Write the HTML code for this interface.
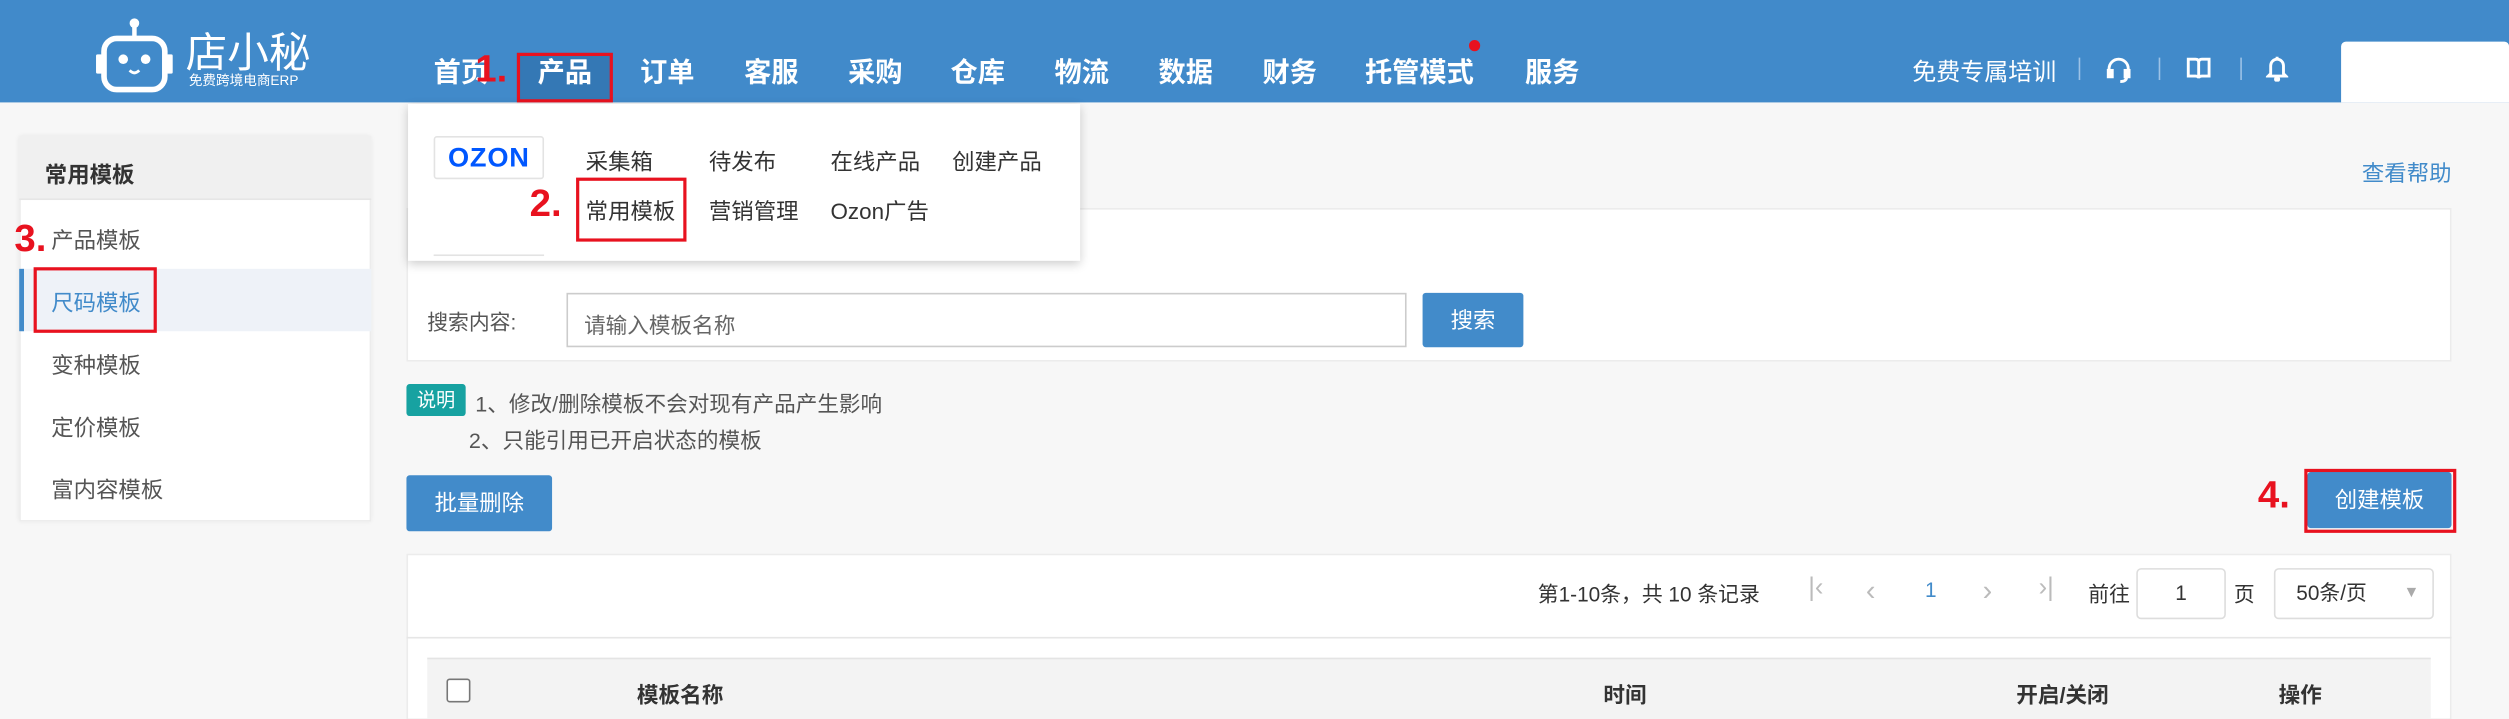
<!DOCTYPE html>
<html><head><meta charset="utf-8"><style>
*{box-sizing:border-box;margin:0;padding:0}
html,body{width:2509px;height:719px;overflow:hidden;background:#f7f7f7}
#w{width:1568px;height:450px;transform:scale(1.6002);transform-origin:0 0;position:relative;font-family:"Liberation Sans","Noto Sans CJK SC",sans-serif;font-size:14px;color:#333}
.a{position:absolute;white-space:nowrap}
.hd{left:0;top:0;width:1568px;height:64px;background:#418aca}
.nav{top:31px;font-size:17px;font-weight:bold;color:#fff}
.red{color:#e8121f;font-weight:bold;font-size:24px}
.rb{border:2px solid #e8121f}
.card{background:#ffffff !important;border:1px solid #ececec}
.btn{background:#428bca;color:#fff;text-align:center;border-radius:2px}
</style></head><body><div id="w">
<div class="a hd"></div>
<!-- logo -->
<svg class="a" style="left:60px;top:11px" width="48" height="47" viewBox="0 0 48 47"><circle cx="24" cy="3.5" r="3" fill="#fff"/><rect x="22.6" y="4" width="2.8" height="9" fill="#fff"/><rect x="5" y="13" width="38" height="32" rx="8" fill="none" stroke="#fff" stroke-width="3.5"/><rect x="0" y="23" width="4" height="12" rx="1" fill="#fff"/><rect x="44" y="23" width="4" height="12" rx="1" fill="#fff"/><circle cx="17" cy="26" r="3" fill="#fff"/><circle cx="31" cy="26" r="3" fill="#fff"/><path d="M21 33 q3 3 6 0" stroke="#fff" stroke-width="1.8" fill="none"/></svg>
<div class="a" style="left:116px;top:13px;font-size:26px;color:#fff;letter-spacing:0px">店小秘</div>
<div class="a" style="left:118px;top:44px;font-size:8.5px;color:#fff">免费跨境电商ERP</div>
<div class="a" style="left:323px;top:33px;width:60px;height:31px;background:#3478b5"></div>
<div class="a rb" style="left:323px;top:33px;width:60px;height:31px"></div>
<div class="a nav" style="left:271px">首页</div>
<div class="a red" style="left:297px;top:30px">1.</div>
<div class="a nav" style="left:336px">产品</div>
<div class="a nav" style="left:400px">订单</div>
<div class="a nav" style="left:465px">客服</div>
<div class="a nav" style="left:530px">采购</div>
<div class="a nav" style="left:594px">仓库</div>
<div class="a nav" style="left:659px">物流</div>
<div class="a nav" style="left:724px">数据</div>
<div class="a nav" style="left:789px">财务</div>
<div class="a nav" style="left:853px">托管模式</div>
<div class="a" style="left:918px;top:25px;width:7px;height:7px;border-radius:50%;background:#e8121f"></div>
<div class="a nav" style="left:953px">服务</div>
<div class="a" style="left:1195px;top:34px;color:#fff;font-size:15px">免费专属培训</div>
<div class="a" style="left:1299px;top:36px;width:1px;height:14px;background:#9cc2e6"></div>
<div class="a" style="left:1349px;top:36px;width:1px;height:14px;background:#9cc2e6"></div>
<div class="a" style="left:1400px;top:36px;width:1px;height:14px;background:#9cc2e6"></div>
<svg class="a" style="left:1316px;top:35px" width="16" height="17" viewBox="0 0 16 17" fill="none" stroke="#fff" stroke-width="1.8"><path d="M2 10V8a6 6 0 0 1 12 0v2"/><rect x="1.5" y="9" width="2.5" height="4" fill="#fff"/><rect x="12" y="9" width="2.5" height="4" fill="#fff"/><path d="M13 13q0 3-4 3"/></svg>
<svg class="a" style="left:1366px;top:35px" width="16" height="16" viewBox="0 0 16 16" fill="none" stroke="#fff" stroke-width="1.8"><path d="M1.5 2h4.5q2 0 2 2v10q0-1.5-2-1.5H1.5zM14.5 2H10q-2 0-2 2v10q0-1.5 2-1.5h4.5z"/></svg>
<svg class="a" style="left:1416px;top:34px" width="14" height="17" viewBox="0 0 14 17" fill="none" stroke="#fff" stroke-width="1.8"><path d="M3 12V7a4 4 0 0 1 8 0v5l1.5 1.5h-11z"/><circle cx="7" cy="15.5" r="1" fill="#fff"/><path d="M7 1.5v1.5"/></svg>
<div class="a" style="left:1463px;top:26px;width:105px;height:38px;background:#fff;border-radius:3px 3px 0 0"></div>

<!-- sidebar -->
<div class="a card" style="left:12px;top:85px;width:220px;height:241px;box-shadow:0 0 3px rgba(0,0,0,.08)"></div>
<div class="a" style="left:12px;top:85px;width:220px;height:40px;background:#f0f0f0;border-bottom:1px solid #e6e6e6"></div>
<div class="a" style="left:28px;top:99px;font-weight:bold">常用模板</div>
<div class="a" style="left:32px;top:140px;color:#555">产品模板</div>
<div class="a" style="left:12px;top:168px;width:220px;height:39px;background:#eef2f8;border-left:3px solid #428bca"></div>
<div class="a" style="left:32px;top:179px;color:#428bca">尺码模板</div>
<div class="a rb" style="left:21px;top:167px;width:77px;height:41px"></div>
<div class="a red" style="left:9px;top:136px">3.</div>
<div class="a" style="left:32px;top:218px;color:#555">变种模板</div>
<div class="a" style="left:32px;top:257px;color:#555">定价模板</div>
<div class="a" style="left:32px;top:296px;color:#555">富内容模板</div>

<div class="a" style="left:1476px;top:98px;color:#428bca;font-size:14px">查看帮助</div>

<!-- search card -->
<div class="a card" style="left:254px;top:130px;width:1278px;height:96px"></div>
<div class="a" style="left:267px;top:191px;color:#555;font-size:13px">搜索内容:</div>
<div class="a" style="left:354px;top:183px;width:525px;height:34px;border:1px solid #ccc;background:#fff"></div>
<div class="a" style="left:365px;top:192px;color:#666;font-size:13.5px">请输入模板名称</div>
<div class="a btn" style="left:889px;top:183px;width:63px;height:34px;line-height:34px">搜索</div>

<div class="a" style="left:254px;top:240px;width:37px;height:20px;background:#17a2a1;color:#fff;font-size:12px;text-align:center;line-height:20px;border-radius:2px">说明</div>
<div class="a" style="left:297px;top:241px;color:#555;font-size:13.5px">1、修改/删除模板不会对现有产品产生影响</div>
<div class="a" style="left:293px;top:264px;color:#555;font-size:13.5px">2、只能引用已开启状态的模板</div>

<div class="a btn" style="left:254px;top:297px;width:91px;height:35px;line-height:35px">批量删除</div>
<div class="a btn" style="left:1442px;top:295px;width:90px;height:35px;line-height:35px">创建模板</div>
<div class="a rb" style="left:1440px;top:293px;width:95px;height:40px"></div>
<div class="a red" style="left:1411px;top:296px">4.</div>

<!-- table card -->
<div class="a card" style="left:254px;top:346px;width:1278px;height:104px"></div>
<div class="a" style="left:254px;top:398px;width:1278px;height:1px;background:#e6e6e6"></div>
<div class="a" style="left:961px;top:361px;font-size:13px">第1-10条，共 10 条记录</div>
<div class="a" style="left:1130px;top:359px;color:#bbb;font-size:16px">|&lsaquo;</div>
<div class="a" style="left:1166px;top:359px;color:#bbb;font-size:18px">&lsaquo;</div>
<div class="a" style="left:1203px;top:361px;color:#428bca;font-size:13px">1</div>
<div class="a" style="left:1239px;top:359px;color:#bbb;font-size:18px">&rsaquo;</div>
<div class="a" style="left:1274px;top:359px;color:#bbb;font-size:16px">&rsaquo;|</div>
<div class="a" style="left:1305px;top:361px;font-size:13px">前往</div>
<div class="a" style="left:1335px;top:355px;width:56px;height:32px;border:1px solid #ddd;border-radius:3px;text-align:center;line-height:30px;font-size:13px">1</div>
<div class="a" style="left:1396px;top:361px;font-size:13px">页</div>
<div class="a" style="left:1421px;top:355px;width:100px;height:32px;border:1px solid #ddd;border-radius:3px;font-size:13px;line-height:30px;padding-left:13px">50条/页<span style="position:absolute;left:80px;color:#aaa;font-size:10px">▼</span></div>
<div class="a" style="left:267px;top:411px;width:1252px;height:39px;background:#f3f3f3;border-top:1px solid #e4e4e4"></div>
<div class="a" style="left:279px;top:424px;width:15px;height:15px;border:1px solid #777;border-radius:2px;background:#fff"></div>
<div class="a" style="left:398px;top:423px;font-weight:bold;font-size:13.5px">模板名称</div>
<div class="a" style="left:1002px;top:423px;font-weight:bold;font-size:13.5px">时间</div>
<div class="a" style="left:1260px;top:423px;font-weight:bold;font-size:13.5px">开启/关闭</div>
<div class="a" style="left:1424px;top:423px;font-weight:bold;font-size:13.5px">操作</div>

<!-- dropdown -->
<div class="a card" style="left:255px;top:65px;width:420px;height:98px;box-shadow:0 2px 6px rgba(0,0,0,.2);border:none"></div>
<div class="a" style="left:271px;top:85px;width:69px;height:27px;border:1px solid #e3e3e3;border-radius:2px;color:#0057ff;font-weight:bold;font-size:17px;text-align:center;line-height:25px;letter-spacing:0.5px">OZON</div>
<div class="a" style="left:271px;top:159px;width:69px;height:4px;border-top:1px solid #e3e3e3"></div>
<div class="a" style="left:366px;top:91px">采集箱</div>
<div class="a" style="left:443px;top:91px">待发布</div>
<div class="a" style="left:519px;top:91px">在线产品</div>
<div class="a" style="left:595px;top:91px">创建产品</div>
<div class="a" style="left:366px;top:122px">常用模板</div>
<div class="a" style="left:443px;top:122px">营销管理</div>
<div class="a" style="left:519px;top:122px">Ozon广告</div>
<div class="a rb" style="left:360px;top:111px;width:69px;height:40px"></div>
<div class="a red" style="left:331px;top:114px">2.</div>
</div></body></html>
